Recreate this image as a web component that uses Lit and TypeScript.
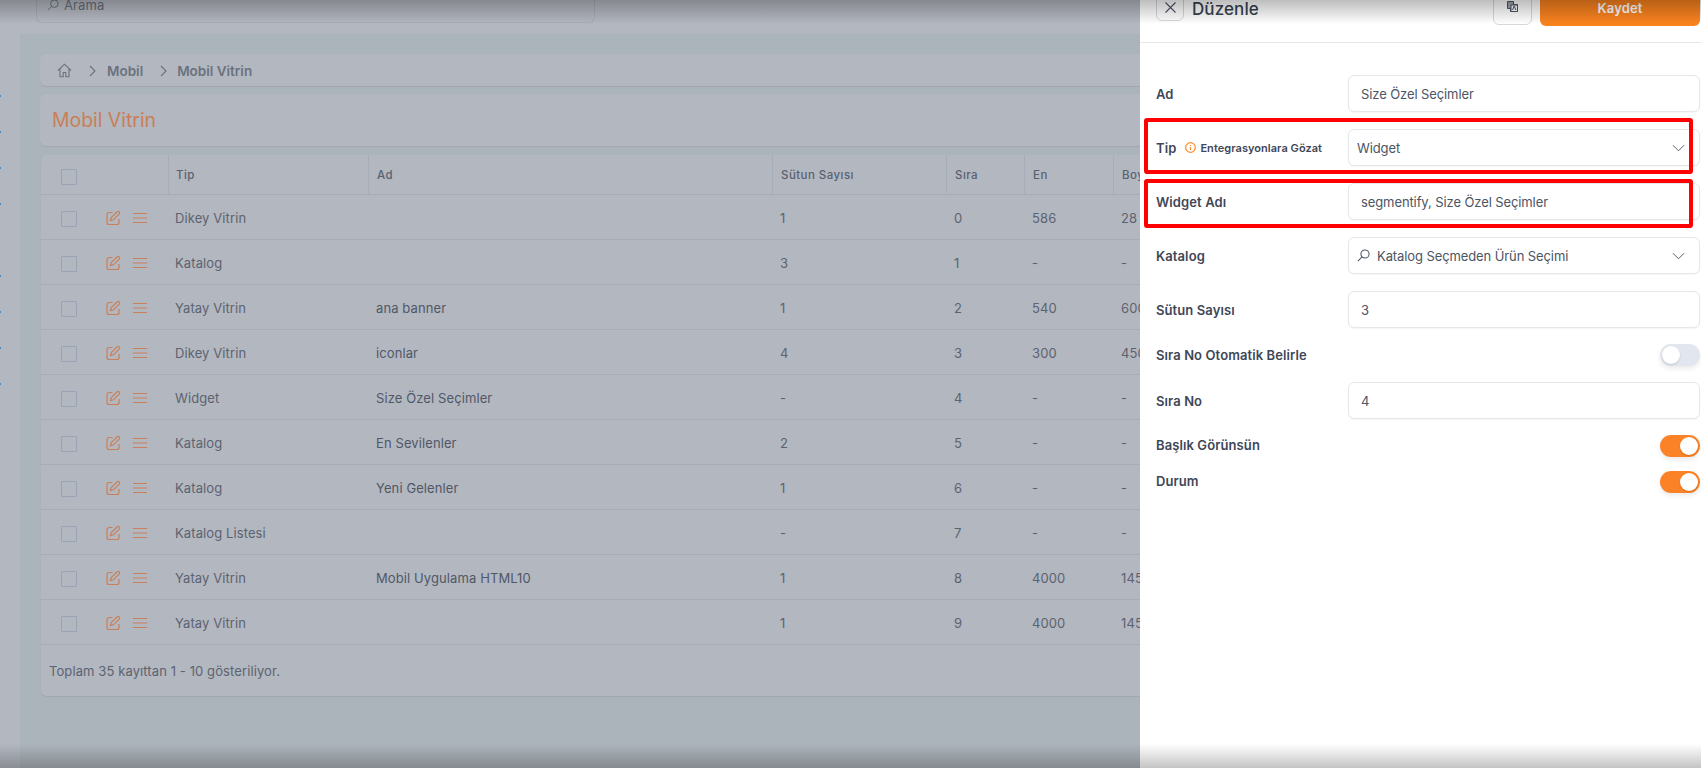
import { LitElement, html, css, svg } from "lit";
import { customElement } from "lit/decorators.js";

const rows: string[][] = [
  ["Dikey Vitrin", "", "1", "0", "586", "28"],
  ["Katalog", "", "3", "1", "-", "-"],
  ["Yatay Vitrin", "ana banner", "1", "2", "540", "600"],
  ["Dikey Vitrin", "iconlar", "4", "3", "300", "450"],
  ["Widget", "Size Özel Seçimler", "-", "4", "-", "-"],
  ["Katalog", "En Sevilenler", "2", "5", "-", "-"],
  ["Katalog", "Yeni Gelenler", "1", "6", "-", "-"],
  ["Katalog Listesi", "", "-", "7", "-", "-"],
  ["Yatay Vitrin", "Mobil Uygulama HTML10", "1", "8", "4000", "1450"],
  ["Yatay Vitrin", "", "1", "9", "4000", "1450"],
];

const ticks = [1, 1, 1, 1, 0, 1, 1, 1, 1];

const editIcon = svg`<path d="M7.5 2.5H4a2 2 0 0 0-2 2v8a2 2 0 0 0 2 2h8a2 2 0 0 0 2-2V9"/><path d="M12.3 1.8a1.5 1.5 0 0 1 2.1 2.1L8.5 9.8l-3 .8.8-3z"/>`;
const chevronDown = html`<svg class="chev" viewBox="0 0 14 8"><path d="M1 1l6 6 6-6"/></svg>`;
const searchIcon = html`<svg class="search" viewBox="0 0 14 14"><circle cx="8.6" cy="5.4" r="4.4"/><path d="M5.4 8.6L1 13"/></svg>`;

@customElement("app-root")
export class AppRoot extends LitElement {
  static styles = css`
    :host {
      display: block;
      position: relative;
      width: 1701px;
      height: 768px;
      overflow: hidden;
      font-family: Inter, "Noto Sans", sans-serif;
      font-size: 13px;
      letter-spacing: 0.1px;
      color: #5c6370;
      background: #b3b7c0;
    }
    .page { display: flex; height: 768px; }
    .side { width: 20px; flex: none; padding-top: 95px; display: flex; flex-direction: column; box-sizing: border-box; }
    .tick { height: 36px; flex: none; }
    .tick i { display: block; width: 1px; height: 2px; background: #4d8abf; }
    .main { flex: 1; min-width: 0; display: flex; flex-direction: column; }
    .topbar { height: 34px; flex: none; padding-left: 16px; box-sizing: border-box; }
    .searchbox {
      width: 559px; height: 23px; box-sizing: border-box; padding: 0 0 10px 10px;
      display: flex; align-items: flex-end; gap: 5px;
      border: 1px solid #a5abb6; border-top: 0; border-radius: 0 0 6px 6px; color: #686e79; line-height: 14px;
    }
    .searchbox .search { width: 12px; height: 12px; stroke: #686e79; margin-bottom: 1px; }
    .content { flex: 1; background: #acb4bb; padding: 20px 20px 0; display: flex; flex-direction: column; gap: 8px; }
    .card { background: #b3b7c0; border-radius: 6px; box-shadow: 0 1px 1px #a0a6b1; }
    .crumb { height: 32px; display: flex; align-items: center; padding-left: 17px; padding-top: 1px; box-sizing: border-box; font-weight: 600; font-size: 13.5px; letter-spacing: 0; color: #6b727e; flex: none; }
    .crumb .home { width: 15px; height: 15px; fill: none; stroke: #6b727e; stroke-width: 1.1; }
    .crumb .sep { width: 7px; height: 12px; fill: none; stroke: #6b727e; stroke-width: 1.1; margin: 0 11px 0 17px; }
    .crumb .sep.two { margin-left: 17px; margin-right: 10px; }
    .title { height: 52px; display: flex; align-items: center; padding-left: 12px; font-size: 19.4px; letter-spacing: 0; color: #c97f57; flex: none; }
    .table { margin-top: 1px; margin-left: 1px; flex: none; }
    .row {
      display: grid; grid-template-columns: 127px 200px 404px 174px 78px 89px 1fr;
      height: 45px; align-items: center; border-bottom: 1px solid #a5abb7; box-sizing: border-box;
    }
    .row.head { height: 40px; font-size: 11.5px; font-weight: 500; letter-spacing: 0.45px; color: #5a6270; }
    .row.head > div { height: 100%; display: flex; align-items: center; border-left: 1px solid #a8aeb9; padding-left: 8px; box-sizing: border-box; }
    .row.head > div:first-child { border-left: 0; padding-left: 20px; }
    .row > div { padding-left: 8px; padding-top: 1px; white-space: nowrap; }
    .row > div:nth-child(2) { padding-left: 7px; }
    .row .tools { padding-left: 20px; padding-top: 0; display: flex; align-items: center; }
    .cell-ad { color: #505867; }
    .check { width: 16px; height: 16px; border: 1px solid #9aa3b4; box-sizing: border-box; border-radius: 1px; flex: none; }
    .row .check { margin-top: 4px; }
    .edit { width: 16px; height: 16px; fill: none; stroke: #c98058; stroke-width: 1.2; margin-left: 28px; margin-top: 1px; }
    .menu { width: 14px; height: 12px; margin-left: 12px; margin-top: 1px; stroke: #c98058; stroke-width: 1.1; }
    .foot { height: 51px; display: flex; align-items: center; padding-left: 8px; padding-top: 1px; box-sizing: border-box; }

    .panel {
      position: absolute; left: 1140px; top: 0; width: 561px; height: 768px;
      background: #fff; color: #374151; display: flex; flex-direction: column;
    }
    .phead {
      margin-top: -12px; height: 55px; flex: none; box-sizing: border-box; padding: 0 1px 0 16px;
      border-bottom: 1px solid #e5e7eb; display: flex; align-items: flex-start;
    }
    .close {
      width: 28px; height: 28px; margin-top: 5px; box-sizing: border-box; border: 1px solid #d4d7dc; border-radius: 6px;
      display: flex; align-items: center; justify-content: center;
    }
    .close svg { width: 11px; height: 11px; stroke: #4b5563; stroke-width: 1.1; }
    .ptitle { margin: 8px 0 0 8px; font-size: 17px; font-weight: 500; line-height: 26px; color: #374151; }
    .spacer { flex: 1; }
    .iconbtn {
      width: 39px; height: 37px; box-sizing: border-box; border: 1px solid #d4d7dc; border-radius: 6px; margin-right: 8px;
      display: flex; align-items: center; justify-content: center; background: #fff;
    }
    .iconbtn svg { width: 11px; height: 11px; }
    .save {
      width: 160px; height: 38px; border-radius: 6px; background: #f9821f; color: #fff; font-weight: 600; box-sizing: border-box; padding-top: 1px;
      display: flex; align-items: center; justify-content: center; font-size: 13px;
    }
    .form { padding: 32px 1px 0 16px; display: flex; flex-direction: column; position: relative; }
    .frow { display: grid; grid-template-columns: 192px 1fr; align-items: center; margin-bottom: 17px; font-weight: 600; color: #3f4757; }
    .input {
      height: 37px; box-sizing: border-box; border: 1px solid #e5e7eb; border-radius: 6px; background: #fff;
      box-shadow: 0 1px 1px rgba(0,0,0,0.04); display: flex; align-items: center; padding: 0 12px;
      font-weight: 400; color: #4b5563; letter-spacing: -0.1px;
    }
    .input.sel { padding: 0 14px 0 8px; }
    .input .grow { flex: 1; }
    .input .search { width: 13px; height: 13px; margin-right: 7px; stroke: #4b5563; }
    .chev { width: 13px; height: 8px; fill: none; stroke: #4b5563; stroke-width: 1; }
    svg.search { fill: none; stroke-width: 1.1; }
    .tip { display: flex; align-items: center; }
    .tip svg { width: 11px; height: 11px; margin: 0 4px 0 9px; fill: none; stroke: #fb8c2b; stroke-width: 1.2; }
    .tip small { font-size: 11px; font-weight: 600; letter-spacing: 0.05px; }
    .frow.sw { margin-bottom: 0; height: 22px; }
    .frow.sw.up > span { margin-top: -2px; }
    .toggle {
      justify-self: end; width: 40px; height: 22px; border-radius: 11px; background: #e2e6ee; box-sizing: border-box; padding: 2px;
      box-shadow: 0 3px 5px rgba(0,0,0,0.08);
    }
    .toggle i { display: block; width: 18px; height: 18px; border-radius: 50%; background: #fff; box-shadow: 0 1px 2px rgba(0,0,0,.15); }
    .toggle.on { background: #fb8227; display: flex; justify-content: flex-end; }
    .frow.gap16 { margin-bottom: 16px; }
    .frow.gap14 { margin-bottom: 14px; }
    .mark {
      position: absolute; left: 4px; width: 549px; box-sizing: border-box; border: 4px solid #ff0000; border-radius: 3px; pointer-events: none;
    }
    .mark.a { top: 75px; height: 56px; }
    .mark.b { top: 136px; height: 49px; }
    .shade { position: absolute; left: 0; right: 0; pointer-events: none; }
    .shade.t { top: 0; height: 24px; background: linear-gradient(rgba(0,0,0,0.26), rgba(0,0,0,0)); }
    .shade.b { bottom: 0; height: 24px; background: linear-gradient(rgba(0,0,0,0), rgba(0,0,0,0.23)); }
  `;

  render() {
    return html`
      <div class="page">
        <div class="side">${ticks.map((t) => html`<div class="tick">${t ? html`<i></i>` : ""}</div>`)}</div>
        <div class="main">
          <div class="topbar"><div class="searchbox">${searchIcon}<span>Arama</span></div></div>
          <div class="content">
            <div class="card crumb">
              <svg class="home" viewBox="0 0 15 15"><path d="M1 7.5L7.5 1.2 14 7.5M3 6v7.8h3.2V9.5h2.6v4.3H12V6"/></svg>
              <svg class="sep" viewBox="0 0 7 12"><path d="M1 1l5 5-5 5"/></svg><span>Mobil</span>
              <svg class="sep two" viewBox="0 0 7 12"><path d="M1 1l5 5-5 5"/></svg><span>Mobil Vitrin</span>
            </div>
            <div class="card title">Mobil Vitrin</div>
            <div class="card table">
              <div class="row head">
                <div><span class="check"></span></div><div>Tip</div><div>Ad</div><div>Sütun Sayısı</div><div>Sıra</div><div>En</div><div>Boy</div>
              </div>
              ${rows.map((r) => html`
                <div class="row">
                  <div class="tools">
                    <span class="check"></span>
                    <svg class="edit" viewBox="0 0 16 16">${editIcon}</svg>
                    <svg class="menu" viewBox="0 0 14 12"><path d="M0 1.5h14M0 6h14M0 10.5h14"/></svg>
                  </div>
                  <div>${r[0]}</div><div class="cell-ad">${r[1]}</div><div>${r[2]}</div><div>${r[3]}</div><div>${r[4]}</div><div>${r[5]}</div>
                </div>`)}
              <div class="foot">Toplam 35 kayıttan 1 - 10 gösteriliyor.</div>
            </div>
          </div>
        </div>
      </div>
      <aside class="panel">
        <div class="phead">
          <div class="close"><svg viewBox="0 0 11 11"><path d="M.5.5l10 10M10.5.5l-10 10"/></svg></div>
          <div class="ptitle">Düzenle</div>
          <div class="spacer"></div>
          <div class="iconbtn"><svg viewBox="0 0 11 11"><path d="M.5.5h6v3h4v7h-7v-3h-3z" fill="#9ca3af" stroke="#4b5563" stroke-width="1"/><path d="M4 4h6.5v6.5H4z" fill="#fff" stroke="#4b5563"/><path d="M5.5 9l1.7-4 1.7 4" fill="none" stroke="#4b5563"/></svg></div>
          <div class="save">Kaydet</div>
        </div>
        <div class="form">
          <div class="frow"><span>Ad</span><div class="input">Size Özel Seçimler</div></div>
          <div class="frow">
            <span class="tip">Tip<svg viewBox="0 0 11 11"><circle cx="5.5" cy="5.5" r="4.8"/><path d="M5.5 5v3M5.5 3v1"/></svg><small>Entegrasyonlara Gözat</small></span>
            <div class="input sel"><span class="grow">Widget</span>${chevronDown}</div>
          </div>
          <div class="frow"><span>Widget Adı</span><div class="input">segmentify, Size Özel Seçimler</div></div>
          <div class="frow"><span>Katalog</span><div class="input sel">${searchIcon}<span class="grow">Katalog Seçmeden Ürün Seçimi</span>${chevronDown}</div></div>
          <div class="frow gap16"><span>Sütun Sayısı</span><div class="input">3</div></div>
          <div class="frow sw gap16"><span>Sıra No Otomatik Belirle</span><div class="toggle"><i></i></div></div>
          <div class="frow gap16"><span>Sıra No</span><div class="input">4</div></div>
          <div class="frow sw up gap14"><span>Başlık Görünsün</span><div class="toggle on"><i></i></div></div>
          <div class="frow sw up"><span>Durum</span><div class="toggle on"><i></i></div></div>
          <div class="mark a"></div>
          <div class="mark b"></div>
        </div>
      </aside>
      <div class="shade t"></div>
      <div class="shade b"></div>
    `;
  }
}
